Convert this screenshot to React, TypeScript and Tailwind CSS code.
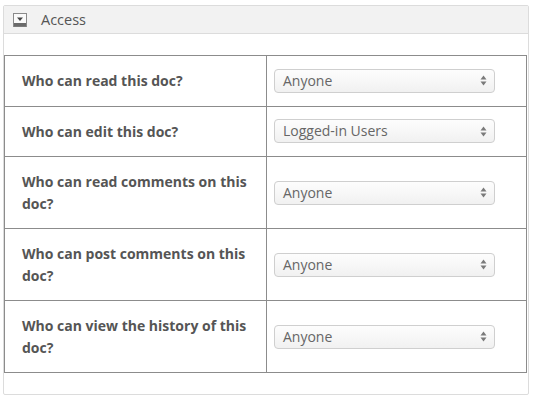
const ROWS = [
  { q: "Who can read this doc?", v: "Anyone" },
  { q: "Who can edit this doc?", v: "Logged-in Users" },
  { q: "Who can read comments on this doc?", v: "Anyone" },
  { q: "Who can post comments on this doc?", v: "Anyone" },
  { q: "Who can view the history of this doc?", v: "Anyone" },
];

function ToggleIcon() {
  return (
    <svg width="14" height="14" viewBox="0 0 14 14" className="shrink-0">
      <rect x="0.5" y="0.5" width="13" height="13" fill="#fafafa" stroke="#8a8a8a" />
      <rect x="1" y="10" width="12" height="3.5" fill="#6a6a6a" />
      <path d="M4 4.5 L10 4.5 L7 8 Z" fill="#444" />
    </svg>
  );
}

function FakeSelect({ value }: { value: string }) {
  return (
    <div className="flex items-center justify-between w-[221px] h-[24px] rounded-[4px] border border-[#cfcfcf] bg-gradient-to-b from-[#fdfdfd] to-[#f1f1f1] pl-[8px] pr-[7px]">
      <span className="text-[14px] text-[#666] leading-none">{value}</span>
      <svg width="7" height="11" viewBox="0 0 7 11">
        <path d="M3.5 0.5 L6.5 4.5 L0.5 4.5 Z" fill="#7a7a7a" />
        <path d="M0.5 6.5 L6.5 6.5 L3.5 10.5 Z" fill="#7a7a7a" />
      </svg>
    </div>
  );
}

export default function App() {
  return (
    <div className="w-[535px] h-[400px] bg-white pt-[5px] pl-[3px] font-['Open_Sans',sans-serif]">
      <div className="w-[526px] border border-[#dcdcdc] rounded-[2px]">
        <div className="h-[28px] bg-[#f2f2f2] border-b border-[#dcdcdc] flex items-center pl-[9px] gap-[14px]">
          <ToggleIcon />
          <span className="text-[14.5px] text-[#555]">Access</span>
        </div>
        <div className="pt-[21px] pb-[21px]">
          <table className="w-[523px] border-collapse border border-[#8c8c8c]">
            <tbody>
              {ROWS.map((r) => (
                <tr key={r.q} className="border-b border-[#8c8c8c]">
                  <td className="w-[262px] border-r border-[#8c8c8c] pl-[17px] pr-[10px] py-[14px] align-middle text-[14px] leading-[21.5px] font-bold text-[#555]">
                    {r.q}
                  </td>
                  <td className="pl-[7px] align-middle">
                    <FakeSelect value={r.v} />
                  </td>
                </tr>
              ))}
            </tbody>
          </table>
        </div>
      </div>
    </div>
  );
}
